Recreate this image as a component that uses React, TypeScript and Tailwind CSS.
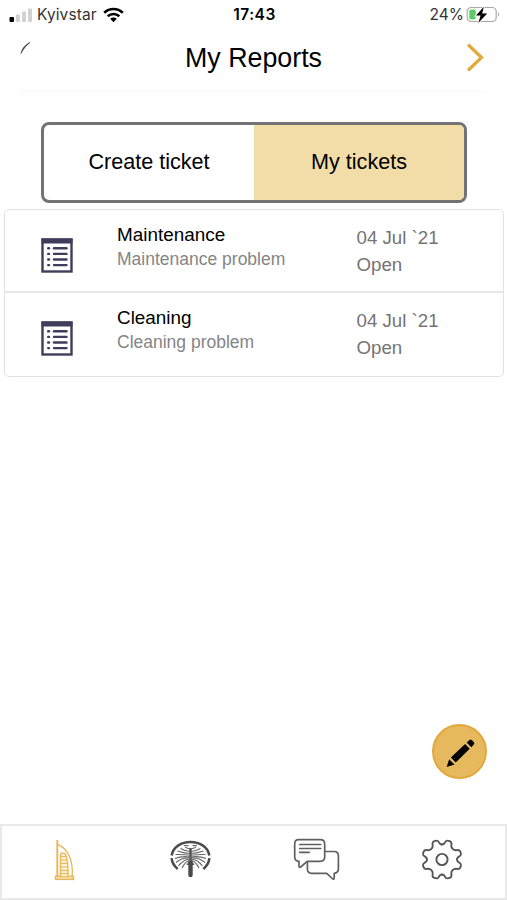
import React from "react";
import clsx from "clsx";

interface Ticket {
  id: number;
  title: string;
  description: string;
  date: string;
  status: string;
}

const tickets: Ticket[] = [
  {
    id: 1,
    title: "Maintenance",
    description: "Maintenance problem",
    date: "04 Jul `21",
    status: "Open",
  },
  {
    id: 2,
    title: "Cleaning",
    description: "Cleaning problem",
    date: "04 Jul `21",
    status: "Open",
  },
];

const StatusBar = () => (
  <div className="grid h-[30px] grid-cols-3 items-center pr-[7px] pl-[9px] font-['Inter',sans-serif] text-[#333]">
    <div className="flex items-center">
      <svg width="24" height="16" viewBox="0 0 24 16">
        <rect x="0.5" y="10" width="4.5" height="5" rx="1" fill="#000" />
        <rect x="7" y="7.5" width="4" height="7.5" rx="1" fill="#d2d2d2" />
        <rect x="13" y="4.5" width="4" height="10.5" rx="1" fill="#d2d2d2" />
        <rect x="19" y="1.5" width="4" height="13.5" rx="1" fill="#d2d2d2" />
      </svg>
      <span className="ml-[4px] text-[15.5px] tracking-[0.1px]">Kyivstar</span>
      <svg className="ml-[6px]" width="21" height="16" viewBox="0 0 21 16">
        <g fill="none" stroke="#000" strokeWidth="2.6">
          <path d="M1.2 5.7C6.5 0.7 14.5 0.7 19.8 5.7" />
          <path d="M4.7 9.3C8 6.3 13 6.3 16.3 9.3" />
        </g>
        <path d="M7.2 11.8C9 10.2 12 10.2 13.8 11.8L10.5 15.2Z" fill="#000" />
      </svg>
    </div>
    <span className="text-center text-[15.5px] font-semibold tracking-[0.5px] text-black">
      17:43
    </span>
    <div className="flex items-center justify-end">
      <span className="text-[15.5px]">24%</span>
      <svg className="ml-[2px]" width="34" height="18" viewBox="0 0 34 18">
        <rect x="1.2" y="1.5" width="29" height="14" rx="4" fill="none" stroke="#a8a8a8" strokeWidth="1.2" />
        <path d="M32 6.2c1.6 1 1.6 3.6 0 4.6z" fill="#a8a8a8" />
        <rect x="3.3" y="3.5" width="6.5" height="10" rx="1.8" fill="#5dcb68" />
        <path
          d="M17.8 0.8L10 9.6h4.6l-2.3 7.4L21.2 7.4h-5z"
          fill="#000"
          stroke="#fff"
          strokeWidth="1.8"
          paintOrder="stroke"
        />
      </svg>
    </div>
  </div>
);

const Header = () => (
  <header className="mx-[20px] flex h-[62px] items-center justify-between border-b border-[#f7f7f7] pb-[5px]">
    <svg width="20" height="40" viewBox="0 0 20 40">
      <path d="M1 15.5C1.8 11 5 6.5 10 4.5C6.5 7.3 3.5 10.5 1 15.5Z" fill="#333" stroke="#555" strokeWidth="0.7" />
    </svg>
    <h1 className="text-[26.8px] leading-none text-black">My Reports</h1>
    <svg width="20" height="30" viewBox="0 0 20 30">
      <path d="M2 2.5L14.5 14.5L2 26.5" fill="none" stroke="#e2a93b" strokeWidth="3.2" strokeLinecap="round" />
    </svg>
  </header>
);

const ListIcon = () => (
  <svg width="32" height="35" viewBox="0 0 32 35">
    <rect x="1.5" y="1.5" width="29" height="32" fill="#fff" stroke="#403d5c" strokeWidth="2.4" />
    <rect x="0.5" y="0.5" width="31" height="5" fill="#403d5c" />
    {[10.3, 15.9, 21.5, 27.1].map((y) => (
      <g key={y} stroke="#403d5c" strokeWidth="2.4" strokeLinecap="round">
        <path d={`M7.2 ${y}h.8`} />
        <path d={`M13 ${y}h12.5`} />
      </g>
    ))}
  </svg>
);

const TicketRow: React.FC<{ ticket: Ticket }> = ({ ticket }) => (
  <li className="flex h-[83px] border-[#e6e6e6] not-last:border-b-2">
    <div className="w-[112px] pt-[28px] pl-[36px]">
      <ListIcon />
    </div>
    <div className="w-[239.5px] pt-[12px]">
      <p className="text-[18.9px] leading-[25px] text-black">{ticket.title}</p>
      <p className="text-[17.5px] leading-[24px] text-[#858585]">
        {ticket.description}
      </p>
    </div>
    <div className="pt-[14px] text-[18.7px] leading-[27px] text-[#747474]">
      <p>{ticket.date}</p>
      <p>{ticket.status}</p>
    </div>
  </li>
);

const TowerIcon = () => (
  <svg width="22" height="44" viewBox="0 0 22 44">
    <g fill="none" stroke="#e8b75c" strokeWidth="1.4">
      <path d="M3.3 2V38.5" strokeWidth="1.9" />
      <path d="M3.3 6.5C12 9 19.5 20 18.2 38.5" />
      <rect x="1.5" y="38.2" width="18" height="3.2" fill="#f8dfa5" />
      <path d="M6.5 38V17.5C6.5 14 11 14 12 17.5C13.8 23 14.2 31 14 38" fill="#fdf0d2" />
      <path d="M6.5 18.5h5.5M6.5 22h6.5M6.5 25.5h7M6.5 29h7.5M6.5 32.5h7.5M6.5 35.5h7.5" strokeWidth="1.2" />
    </g>
  </svg>
);

const PalmIcon = () => (
  <svg width="42" height="42" viewBox="-20.5 -19 42 42" fill="none" stroke="#4a4a4a">
    <g strokeWidth="2.5">
      <path d="M-18.8 -2.5C-16 -20.5 16 -20.5 18.8 -2.5" />
      <path d="M-18.9 0.2C-18.5 4.5 -16.3 8.2 -12.8 11" />
      <path d="M18.9 0.2C18.5 4.5 16.3 8.2 12.8 11" />
    </g>
    <path d="M0 -10V5" strokeWidth="2.4" />
    <path d="M0 4V17" strokeWidth="4.4" strokeLinecap="round" />
    <path d="M-3.4 6.5L0 2.5L3.4 6.5Z" fill="#4a4a4a" />
    {["", "scale(-1 1)"].map((flip) => (
      <g key={flip} transform={flip} stroke="#666" strokeWidth="1.1">
        <path d="M0 -9C2 -9.5 3.5 -10 5.5 -10.5" />
        <path d="M0 -6.5C4 -6.5 7.5 -8 10 -9.5" />
        <path d="M0 -4.5C5 -4.5 10 -6 13 -7" />
        <path d="M0 -2.8C6 -3.5 11 -3.7 15 -3.5" />
        <path d="M0 -1C6 -1.8 12 -1 15.5 0.5" />
        <path d="M0 0C6 -0.5 11 1.5 14.5 4.5" />
        <path d="M0 1C5 1 9 4 12 8" />
        <path d="M0 2C4 3 6.5 6 8.5 10" />
      </g>
    ))}
    <path d="M-6.5 -12.3H-2M2 -12.3H6.5" strokeWidth="1" />
  </svg>
);

const ChatIcon = () => (
  <svg width="48" height="44" viewBox="-0.7 0.5 48 44" fill="none" stroke="#606060" strokeWidth="1.7" strokeLinejoin="round">
    <path d="M6 2.2H27.5Q32 2.2 32 6.5V19.5Q32 23.8 27.5 23.8H14.5L8 29.5C6.5 30.3 6.3 29.5 6.3 28.5V23.8Q2 23.5 2 19.5V6.5Q2 2.2 6 2.2Z" />
    <path d="M32 14H41.5Q45.7 14 45.7 18.5V31Q45.7 35.5 41.5 35.8V40.5C41.5 42 40.5 42 39.5 41L34 35.8H19Q14.7 35.8 14.7 31.5V24" />
    <path d="M7 7H28M7 11H28M7 14.8H16.5" strokeLinecap="round" />
  </svg>
);

const GearIcon = () => (
  <svg width="42" height="42" viewBox="-21 -20.5 42 42" fill="none" stroke="#555" strokeWidth="1.9" strokeLinecap="round">
    {[0, 90, 180, 270].map((angle) => (
      <path
        key={angle}
        transform={`rotate(${angle})`}
        d="M0 -15C2 -15 2.7 -16.2 3.4 -17.6C4.2 -19.3 5.2 -19.5 8.2 -18.2C10 -17.4 9.6 -16 9.3 -14.3C9 -11.5 11.5 -9 14.3 -9.3C16 -9.6 17.4 -10 18.2 -8.2C19.5 -5.2 19.3 -4.2 17.6 -3.4C16.2 -2.7 15 -2 15 0"
      />
    ))}
    <circle r="5.6" />
  </svg>
);

const App = () => {
  const tabs = ["Create ticket", "My tickets"];
  const activeTab = "My tickets";

  return (
    <div className="flex h-[900px] w-full flex-col bg-white font-['Liberation_Sans',Arial,sans-serif]">
      <StatusBar />
      <Header />

      <div className="mt-[30px] mr-[40px] ml-[41px] flex h-[81px] overflow-hidden rounded-[8px] border-[3px] border-[#737373]">
        {tabs.map((tab) => (
          <button
            key={tab}
            className={clsx(
              "flex-1 text-[21.6px] text-black",
              tab === activeTab && "bg-[#f2dca8]"
            )}
          >
            {tab}
          </button>
        ))}
      </div>

      <ul className="mt-[6px] mr-[3px] ml-[4px] rounded-[5px] border-[1.5px] border-[#e2e2e2]">
        {tickets.map((ticket) => (
          <TicketRow key={ticket.id} ticket={ticket} />
        ))}
      </ul>

      <div className="flex flex-1 items-end justify-end pr-[20px] pb-[45px]">
        <button className="flex size-[55px] items-center justify-center rounded-full border-2 border-[#e2a83d] bg-[#e6b95e]">
          <svg width="32" height="32" viewBox="-0.7 -1 32 32" fill="#000">
            <path d="M2 30L4.4 22.2L9.8 27.6Z" />
            <path d="M6.2 20.4L20.4 7.1L25 11.8L11 25.5Z" />
            <path d="M22 5.6L24.8 3Q26 2 27.2 3.2L29.2 5.3Q30.2 6.5 29 7.7L26.5 10.2Z" />
          </svg>
        </button>
      </div>

      <nav className="grid h-[76px] grid-cols-4 items-center justify-items-center border-2 border-[#e9e9ea] pb-[5px]">
        <TowerIcon />
        <PalmIcon />
        <ChatIcon />
        <GearIcon />
      </nav>
    </div>
  );
};

export default App;
